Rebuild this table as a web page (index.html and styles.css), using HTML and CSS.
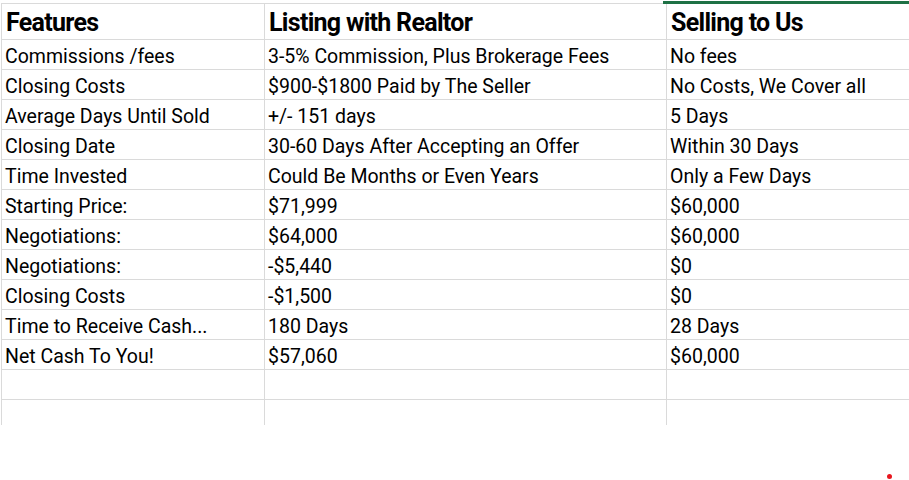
FILE: index.html
```html
<!DOCTYPE html>
<html>
<head>
<meta charset="utf-8">
<link rel="stylesheet" href="styles.css">
</head>
<body>
<div class="page">
  <div class="sheet">
    <div class="row head">
      <div class="cell">Features</div>
      <div class="cell">Listing with Realtor</div>
      <div class="cell">Selling to Us</div>
    </div>
    <div class="row"><div class="cell">Commissions /fees</div><div class="cell">3-5% Commission, Plus Brokerage Fees</div><div class="cell">No fees</div></div>
    <div class="row"><div class="cell">Closing Costs</div><div class="cell">$900-$1800 Paid by The Seller</div><div class="cell">No Costs, We Cover all</div></div>
    <div class="row"><div class="cell">Average Days Until Sold</div><div class="cell">+/- 151 days</div><div class="cell">5 Days</div></div>
    <div class="row"><div class="cell">Closing Date</div><div class="cell">30-60 Days After Accepting an Offer</div><div class="cell">Within 30 Days</div></div>
    <div class="row"><div class="cell">Time Invested</div><div class="cell">Could Be Months or Even Years</div><div class="cell">Only a Few Days</div></div>
    <div class="row"><div class="cell">Starting Price:</div><div class="cell">$71,999</div><div class="cell">$60,000</div></div>
    <div class="row"><div class="cell">Negotiations:</div><div class="cell">$64,000</div><div class="cell">$60,000</div></div>
    <div class="row"><div class="cell">Negotiations:</div><div class="cell">-$5,440</div><div class="cell">$0</div></div>
    <div class="row"><div class="cell">Closing Costs</div><div class="cell">-$1,500</div><div class="cell">$0</div></div>
    <div class="row"><div class="cell">Time to Receive Cash...</div><div class="cell">180 Days</div><div class="cell">28 Days</div></div>
    <div class="row"><div class="cell">Net Cash To You!</div><div class="cell">$57,060</div><div class="cell">$60,000</div></div>
    <div class="row"><div class="cell"></div><div class="cell"></div><div class="cell"></div></div>
    <div class="row last"><div class="cell"></div><div class="cell"></div><div class="cell"></div></div>
    <div class="selection"></div>
  </div>
  <div class="dot"></div>
</div>
</body>
</html>
```

FILE: styles.css
```css
html, body {
  margin: 0;
  padding: 0;
  background: #ffffff;
}

.page {
  position: relative;
  width: 909px;
  height: 480px;
  overflow: hidden;
}

.sheet {
  position: relative;
  margin-top: 3px;
  margin-left: 1px;
  border-top: 1px solid #dadada;
  border-left: 1px solid #dadada;
  font-family: Roboto, "Liberation Sans", sans-serif;
  color: #000000;
}

.row {
  display: grid;
  grid-template-columns: 263px 402px 1fr;
  height: 30px;
}

.cell {
  border-right: 1px solid #dadada;
  border-bottom: 1px solid #dadada;
  display: flex;
  align-items: flex-end;
  padding: 0 0 2px 3px;
  font-size: 19.5px;
  line-height: 20px;
  white-space: nowrap;
  overflow: hidden;
}

.row .cell:last-child {
  border-right: none;
}

.head {
  height: 36px;
}

.head .cell {
  font-weight: 700;
  font-size: 25px;
  line-height: 25px;
  letter-spacing: -0.7px;
  padding: 0 0 4px 4px;
}

.last {
  height: 25px;
}

.last .cell {
  border-bottom: none;
}

.selection {
  position: absolute;
  top: -3px;
  left: 661px;
  right: 0;
  height: 3px;
  background: #1e7145;
}

.dot {
  position: absolute;
  left: 887px;
  top: 474px;
  width: 5px;
  height: 5px;
  border-radius: 50%;
  background: #e8161e;
}
```
